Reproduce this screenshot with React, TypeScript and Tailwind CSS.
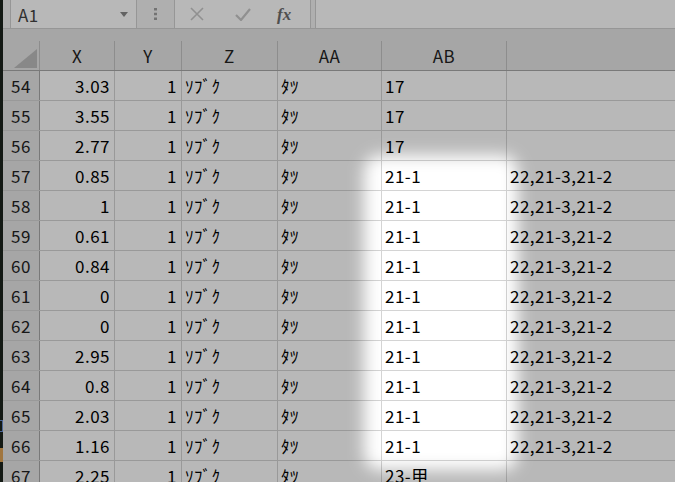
import React from "react";

type Row = { n: number; x: string; ab: string; ac: string };

const rows: Row[] = [
  { n: 54, x: "3.03", ab: "17", ac: "" },
  { n: 55, x: "3.55", ab: "17", ac: "" },
  { n: 56, x: "2.77", ab: "17", ac: "" },
  { n: 57, x: "0.85", ab: "21-1", ac: "22,21-3,21-2" },
  { n: 58, x: "1", ab: "21-1", ac: "22,21-3,21-2" },
  { n: 59, x: "0.61", ab: "21-1", ac: "22,21-3,21-2" },
  { n: 60, x: "0.84", ab: "21-1", ac: "22,21-3,21-2" },
  { n: 61, x: "0", ab: "21-1", ac: "22,21-3,21-2" },
  { n: 62, x: "0", ab: "21-1", ac: "22,21-3,21-2" },
  { n: 63, x: "2.95", ab: "21-1", ac: "22,21-3,21-2" },
  { n: 64, x: "0.8", ab: "21-1", ac: "22,21-3,21-2" },
  { n: 65, x: "2.03", ab: "21-1", ac: "22,21-3,21-2" },
  { n: 66, x: "1.16", ab: "21-1", ac: "22,21-3,21-2" },
  { n: 67, x: "2.25", ab: "23-甲", ac: "" },
];

export default function App() {
  return (
    <div className="relative w-[675px] h-[482px] overflow-hidden bg-white flex font-['Noto_Sans_CJK_JP','Noto_Sans',sans-serif] text-[17px] tracking-[0.5px] text-black">
      {/* left window edge */}
      <div className="relative w-[3px] shrink-0 bg-[#1b231d]">
        <div className="absolute left-0 top-[420px] w-[3px] h-[12px] border border-l-0 border-[#6d8fd0]" />
        <div className="absolute left-0 top-[448px] w-[3px] h-[14px] bg-[#e0a458]" />
      </div>

      <div className="flex-1 flex flex-col min-w-0">
        {/* formula bar */}
        <div className="h-[29px] shrink-0 bg-[#f3f3f3] border-b border-[#d0d0d0] flex items-stretch">
          <div className="ml-[7px] w-[127px] h-[28px] bg-white border border-t-0 border-b-0 border-[#d0d0d0] flex items-center justify-between pl-[7px] pr-[8px]">
            <span className="text-[#444] text-[17px] leading-none">A1</span>
            <svg width="8" height="5" viewBox="0 0 8 5">
              <path d="M0 0 H8 L4 5 Z" fill="#8a8a8a" />
            </svg>
          </div>
          <div className="w-[37px] flex items-center justify-center">
            <svg width="3" height="12" viewBox="0 0 3 12">
              <rect x="0" y="0" width="3" height="2.5" fill="#a0a0a0" />
              <rect x="0" y="4.75" width="3" height="2.5" fill="#a0a0a0" />
              <rect x="0" y="9.5" width="3" height="2.5" fill="#a0a0a0" />
            </svg>
          </div>
          <div className="w-[137px] h-[28px] bg-white border border-t-0 border-b-0 border-[#d0d0d0] flex items-center">
            <svg className="ml-[15px]" width="14" height="14" viewBox="0 0 14 14">
              <path d="M1 1 L13 13 M13 1 L1 13" stroke="#c8c8c8" strokeWidth="1.6" fill="none" />
            </svg>
            <svg className="ml-[31px]" width="16" height="13" viewBox="0 0 16 13">
              <path d="M1 7 L6 12 L15 1" stroke="#c8c8c8" strokeWidth="2.2" fill="none" />
            </svg>
            <span className="ml-[26px] font-['Liberation_Serif',serif] italic font-bold text-[17px] tracking-normal text-[#6e6e6e] leading-none">
              fx
            </span>
          </div>
          <div className="ml-[4px] flex-1 h-[28px] bg-white border-l border-[#d0d0d0]" />
        </div>

        {/* column headers */}
        <div className="h-[42px] shrink-0 bg-[#e6e6e6] border-b border-[#a8a8a8] flex items-end text-[#222]">
          <div className="w-[37px] h-[29px] shrink-0 border-r border-[#c4c4c4] flex items-end justify-end pr-[2px] pb-[2px]">
            <svg width="23" height="19" viewBox="0 0 23 19">
              <path d="M23 0 V19 H0 Z" fill="#bdbdbd" />
            </svg>
          </div>
          <div className="w-[75px] h-[29px] shrink-0 border-r border-[#c4c4c4] flex items-center justify-center">X</div>
          <div className="w-[67px] h-[29px] shrink-0 border-r border-[#c4c4c4] flex items-center justify-center">Y</div>
          <div className="w-[96px] h-[29px] shrink-0 border-r border-[#c4c4c4] flex items-center justify-center">Z</div>
          <div className="w-[104px] h-[29px] shrink-0 border-r border-[#c4c4c4] flex items-center justify-center">AA</div>
          <div className="w-[125px] h-[29px] shrink-0 border-r border-[#c4c4c4] flex items-center justify-center">AB</div>
          <div className="flex-1 h-[29px]" />
        </div>

        {/* rows */}
        {rows.map((r) => (
          <div key={r.n} className="h-[30px] shrink-0 flex border-b border-[#d4d4d4]">
            <div className="w-[37px] shrink-0 bg-[#e6e6e6] border-r border-[#a8a8a8] flex items-center justify-center text-[#222]">
              {r.n}
            </div>
            <div className="w-[75px] shrink-0 border-r border-[#d4d4d4] flex items-center justify-end pr-[4px]">{r.x}</div>
            <div className="w-[67px] shrink-0 border-r border-[#d4d4d4] flex items-center justify-end pr-[4px]">1</div>
            <div className="w-[96px] shrink-0 border-r border-[#d4d4d4] flex items-center pl-[3px]">ｿﾌﾞｸ</div>
            <div className="w-[104px] shrink-0 border-r border-[#d4d4d4] flex items-center pl-[3px]">ﾀﾂ</div>
            <div className="w-[125px] shrink-0 border-r border-[#d4d4d4] flex items-center pl-[3px]">{r.ab}</div>
            <div className="flex-1 flex items-center pl-[3px] whitespace-nowrap">{r.ac}</div>
          </div>
        ))}
      </div>

      {/* spotlight overlay */}
      <div className="pointer-events-none absolute inset-0 overflow-hidden">
        <div className="absolute left-[364px] top-[155px] w-[154px] h-[315px] rounded-[16px] shadow-[0_0_0_800px_rgba(0,0,0,0.28)] blur-[8px]" />
      </div>
    </div>
  );
}
